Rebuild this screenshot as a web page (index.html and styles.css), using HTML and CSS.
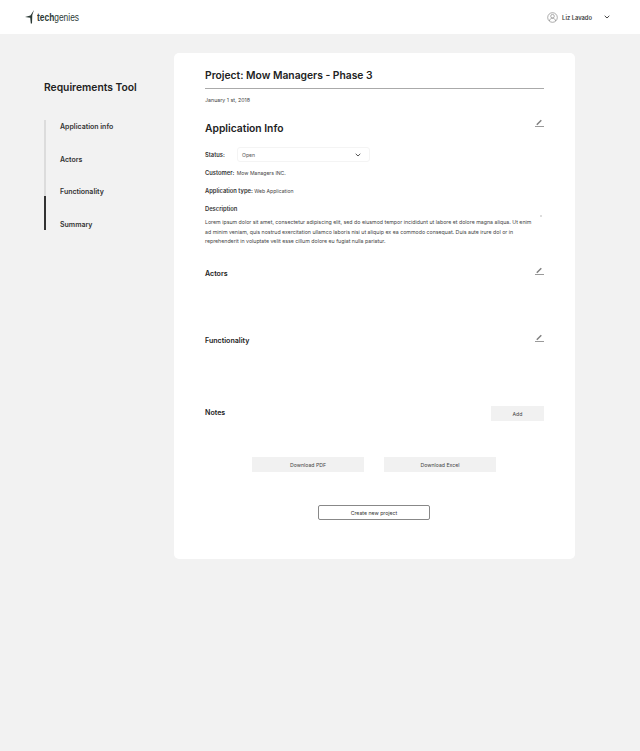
FILE: index.html
```html
<!DOCTYPE html>
<html lang="en">
<head>
<meta charset="utf-8">
<title>Requirements Tool</title>
<link rel="stylesheet" href="styles.css">
</head>
<body>
<header class="topbar">
  <div class="logo">
    <svg class="logo-mark" width="11" height="14" viewBox="0 0 11 14"><path d="M9 0 L7.300 5 L7 13.500 L5.800 13.500 L5.200 7.800 L0 7 L5.400 5.400 Z" fill="#2c3a36"/></svg>
    <span class="logo-text"><b>tech</b>genies</span>
  </div>
  <div class="user">
    <svg class="avatar" width="11" height="11" viewBox="0 0 11 11" fill="none" stroke="#888" stroke-width=".7"><circle cx="5.500" cy="5.500" r="4.800"/><circle cx="5.500" cy="4.200" r="1.800"/><path d="M2.400 9c.4-2 1.600-2.800 3.100-2.800S8.200 7 8.600 9"/></svg>
    <span class="user-name">Liz Lavado</span>
    <svg class="chev" width="6" height="4" viewBox="0 0 6 4" fill="none" stroke="#444" stroke-width="1"><path d="M.7.8 3 3 5.300.8"/></svg>
  </div>
</header>
<div class="layout">
  <aside class="side">
    <h2 class="side-title">Requirements Tool</h2>
    <div class="nav">
      <div class="rail"><div class="thumb"></div></div>
      <nav class="nav-list">
        <a class="nav-item">Application info</a>
        <a class="nav-item">Actors</a>
        <a class="nav-item">Functionality</a>
        <a class="nav-item">Summary</a>
      </nav>
    </div>
  </aside>
  <main class="card">
    <h1 class="project">Project: Mow Managers - Phase 3</h1>
    <p class="date">January 1 st, 2018</p>
    <div class="section-head app-head">
      <h2 class="app-title">Application Info</h2>
      <svg class="edit" width="9" height="8" viewBox="0 0 9 8"><path d="M1.800 5.800 6.300 1.300" stroke="#808080" stroke-width="1.500" fill="none"/><path d="M0 7.500H9" stroke="#808080" stroke-width=".8"/></svg>
    </div>
    <div class="status-row">
      <b class="label status-label">Status:</b>
      <div class="select"><span>Open</span>
        <svg width="6" height="4" viewBox="0 0 6 4" fill="none" stroke="#555" stroke-width="1"><path d="M.7.8 3 3 5.300.8"/></svg>
      </div>
    </div>
    <p class="field"><b class="label label-gap">Customer:</b> Mow Managers INC.</p>
    <p class="field type"><b class="label">Application type:</b> Web Application</p>
    <h3 class="label desc-title">Description</h3>
    <div class="desc-wrap">
      <p class="desc">Lorem ipsum dolor sit amet, consectetur adipiscing elit, sed do eiusmod tempor incididunt ut labore et dolore magna aliqua. Ut enim ad minim veniam, quis nostrud exercitation ullamco laboris nisi ut aliquip ex ea commodo consequat. Duis aute irure dol or in reprehenderit in voluptate velit esse cillum dolore eu fugiat nulla pariatur.</p>
    </div>
    <div class="section-head actors">
      <h3 class="sub">Actors</h3>
      <svg class="edit" width="9" height="8" viewBox="0 0 9 8"><path d="M1.800 5.800 6.300 1.300" stroke="#808080" stroke-width="1.500" fill="none"/><path d="M0 7.500H9" stroke="#808080" stroke-width=".8"/></svg>
    </div>
    <div class="section-head func">
      <h3 class="sub">Functionality</h3>
      <svg class="edit" width="9" height="8" viewBox="0 0 9 8"><path d="M1.800 5.800 6.300 1.300" stroke="#808080" stroke-width="1.500" fill="none"/><path d="M0 7.500H9" stroke="#808080" stroke-width=".8"/></svg>
    </div>
    <div class="notes">
      <h3 class="sub">Notes</h3>
      <button class="btn add">Add</button>
    </div>
    <div class="downloads">
      <button class="btn dl">Download PDF</button>
      <button class="btn dl">Download Excel</button>
    </div>
    <div class="create-row"><button class="create">Create new project</button></div>
  </main>
</div>
</body>
</html>
```
FILE: styles.css
```css
* { box-sizing: border-box; }
html, body { margin: 0; padding: 0; }
body { background: #f2f2f2; font-family: Inter, "Liberation Sans", sans-serif; color: #222; height: 751px; overflow: hidden; }
h1, h2, h3, p { margin: 0; }
.topbar { height: 34px; background: #fff; display: flex; justify-content: space-between; align-items: center; padding: 0 30px 0 25px; }
.logo { display: flex; align-items: center; gap: 1px; }
.logo-text { font-family: "Liberation Sans", sans-serif; font-size: 10px; transform: scaleX(.84); transform-origin: left; color: #2c3a36; }
.logo-text b { font-weight: 700; }
.user { display: flex; align-items: center; }
.user-name { font-size: 5.800px; font-weight: 600; color: #444; margin-left: 4px; }
.chev { margin-left: 12px; }
.layout { display: flex; padding: 19px 65px 0 44px; align-items: flex-start; }
.side { width: 130px; padding-top: 28px; }
.side-title { font-size: 10.300px; font-weight: 600; line-height: 13px; color: #222; }
.nav { margin-top: 26px; display: flex; gap: 14px; }
.rail { width: 2px; height: 110px; background: #dcdcdc; display: flex; align-items: flex-end; }
.thumb { width: 2px; height: 34px; background: #333; }
.nav-list { display: flex; flex-direction: column; }
.nav-item { height: 32.700px; font-size: 7px; font-weight: 600; line-height: 13px; color: #333; }
.card { flex: 1; background: #fff; border-radius: 5px; height: 506px; padding: 15px 31px 0; }
.project { font-size: 10.300px; font-weight: 600; line-height: 14px; padding-bottom: 6px; border-bottom: 1px solid #aaa; color: #222; }
.date { font-size: 5.300px; line-height: 7px; margin-top: 8px; color: #444; }
.section-head { display: flex; justify-content: space-between; align-items: flex-start; }
.app-head { margin-top: 17px; }
.app-title { font-size: 10.300px; font-weight: 600; line-height: 14px; color: #222; }
.edit { margin-top: -2px; }
.status-row { display: flex; align-items: center; margin-top: 12px; height: 15px; }
.label { font-size: 5.800px; font-weight: 600; color: #333; }
.status-label { width: 32px; }
.select { width: 133px; height: 15px; border-radius: 3px; border: 1px solid #f4f4f4; display: flex; justify-content: space-between; align-items: center; padding: 0 8px 0 4px; font-size: 5.100px; color: #555; }
.field { font-size: 5.100px; line-height: 7px; color: #444; margin-top: 7px; }
.label-gap { margin-right: 1px; }
.type { margin-top: 10px; }
.desc-title { line-height: 7px; margin-top: 10px; }
.desc-wrap { position: relative; margin-top: 6px; }
.desc-wrap::after { content: ""; position: absolute; right: 2px; top: -3px; width: 2px; height: 2px; background: #ddd; }
.desc { width: 330px; font-size: 5.250px; line-height: 9.700px; color: #444; }
.sub { font-size: 7.100px; font-weight: 600; line-height: 10px; color: #222; }
.actors { margin-top: 22px; }
.func { margin-top: 57px; }
.notes { display: flex; justify-content: space-between; align-items: flex-start; margin-top: 62px; }
.btn { border: 0; background: #f1f1f1; font: 5.200px Inter, sans-serif; color: #444; padding: 0; }
.add { width: 53px; height: 15px; margin-top: -2px; }
.downloads { display: flex; justify-content: center; gap: 20px; margin-top: 36px; padding-right: 1px; }
.dl { width: 112px; height: 15px; }
.create-row { display: flex; justify-content: center; margin-top: 33px; padding-right: 1px; }
.create { width: 112px; height: 15px; background: #fff; border: 1px solid #888; border-radius: 2px; font: 5.200px Inter, sans-serif; color: #333; padding: 0; }
```
